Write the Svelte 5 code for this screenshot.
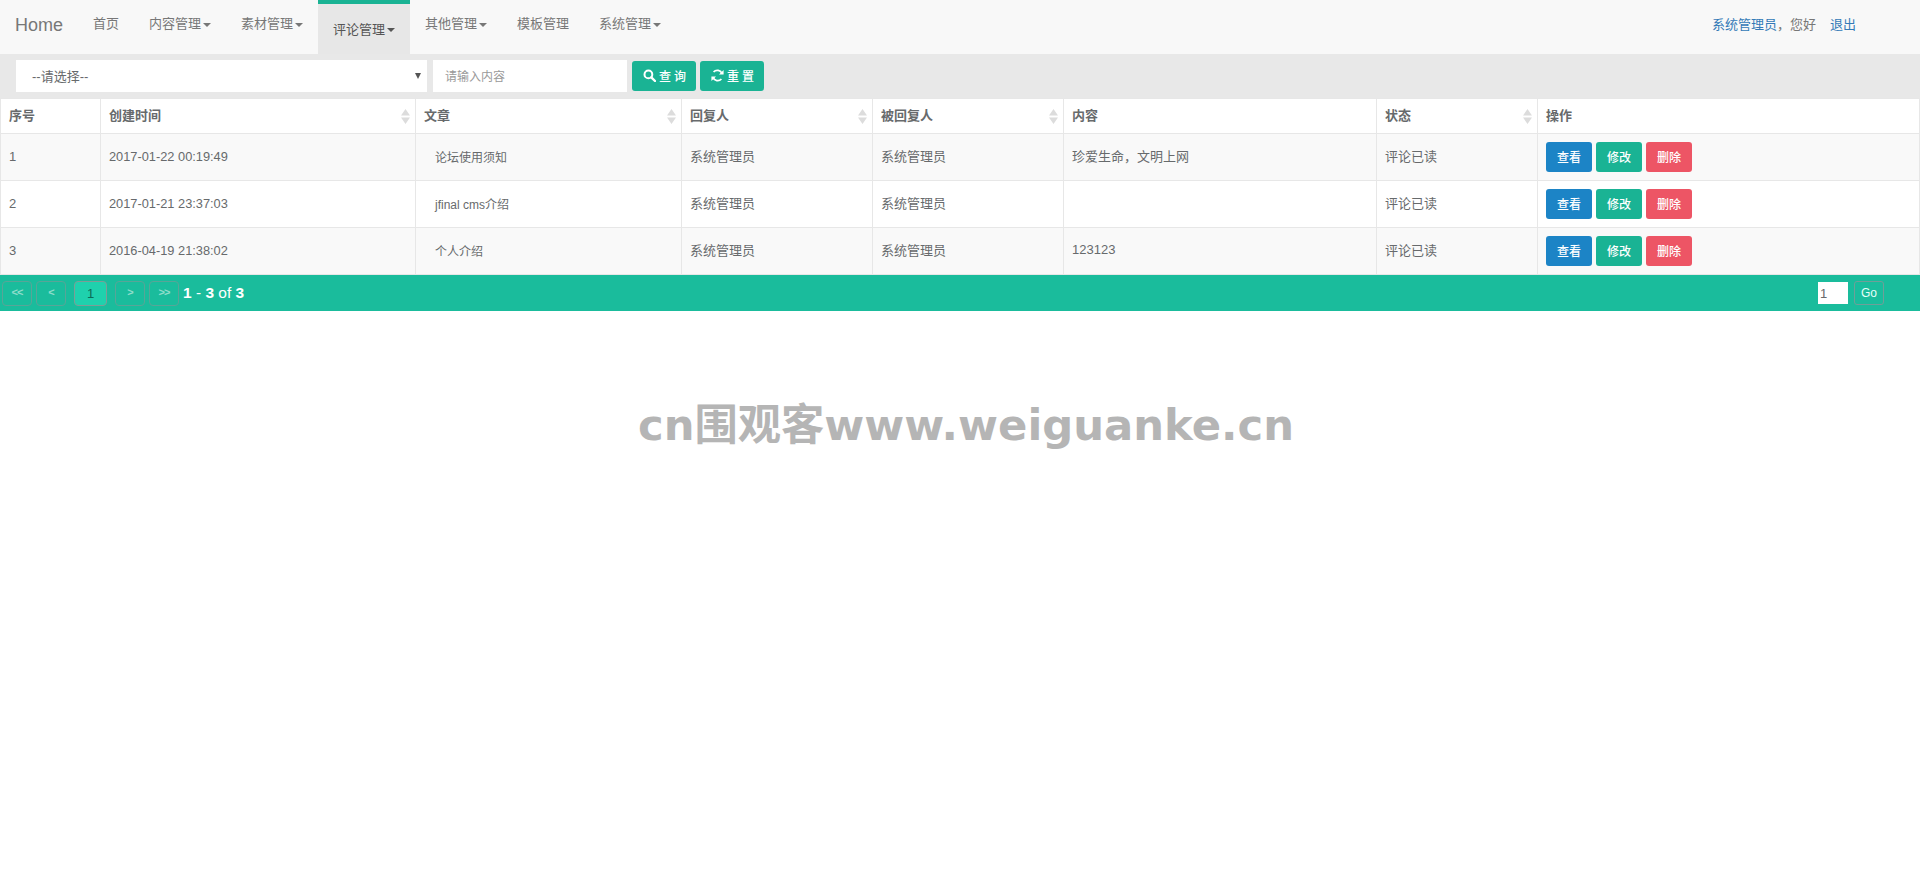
<script lang="ts">
  const navItems = [
    { label: '首页', caret: false },
    { label: '内容管理', caret: true },
    { label: '素材管理', caret: true },
    { label: '评论管理', caret: true, active: true },
    { label: '其他管理', caret: true },
    { label: '模板管理', caret: false },
    { label: '系统管理', caret: true }
  ];

  const columns = [
    { label: '序号', width: 100 },
    { label: '创建时间', width: 315, sort: true },
    { label: '文章', width: 266, sort: true },
    { label: '回复人', width: 191, sort: true },
    { label: '被回复人', width: 191, sort: true },
    { label: '内容', width: 313 },
    { label: '状态', width: 161, sort: true },
    { label: '操作' }
  ];

  const rows = [
    { id: 1, created: '2017-01-22 00:19:49', article: '论坛使用须知', content: '珍爱生命，文明上网' },
    { id: 2, created: '2017-01-21 23:37:03', article: 'jfinal cms介绍', content: '' },
    { id: 3, created: '2016-04-19 21:38:02', article: '个人介绍', content: '123123' }
  ];
</script>

<nav class="navbar">
  <a class="brand" href="#home">Home</a>
  <ul class="navList">
    {#each navItems as item}
      <li class="navItem" class:navItem--active={item.active}>
        {item.label}{#if item.caret}<span class="caret"></span>{/if}
      </li>
    {/each}
  </ul>
  <div class="userInfo">
    <a href="#user">系统管理员</a>，您好<a class="logout" href="#logout">退出</a>
  </div>
</nav>

<form class="toolbar">
  <div class="selectBox">
    <select class="select">
      <option>--请选择--</option>
    </select>
    <span class="selectArrow"></span>
  </div>
  <input class="search" placeholder="请输入内容" />
  <button type="button" class="toolBtn">
    <svg width="13" height="13" viewBox="0 0 13 13" aria-hidden="true">
      <circle cx="5.4" cy="5.4" r="3.9" fill="none" stroke="#fff" stroke-width="2" />
      <path d="M8.3 8.3 12 12" stroke="#fff" stroke-width="2.4" stroke-linecap="round" />
    </svg>
    查询
  </button>
  <button type="button" class="toolBtn">
    <svg width="13" height="13" viewBox="0 0 13 13" aria-hidden="true">
      <path d="M11 4.6A5 5 0 0 0 2.6 3" fill="none" stroke="#fff" stroke-width="1.8" />
      <path d="M2 8.4A5 5 0 0 0 10.4 10" fill="none" stroke="#fff" stroke-width="1.8" />
      <path d="M12.6 1v4.6H8zM.4 12V7.4H5z" fill="#fff" />
    </svg>
    重置
  </button>
</form>

<table class="grid">
  <colgroup>
    {#each columns as col}
      <col style={col.width ? `width: ${col.width}px` : ''} />
    {/each}
  </colgroup>
  <thead>
    <tr>
      {#each columns as col}
        <th>
          <div class="thInner">
            <span class="thLabel">{col.label}</span>
            {#if col.sort}
              <svg class="sortIcon" width="9" height="15" viewBox="0 0 9 15" aria-hidden="true">
                <path d="M4.5 0 9 6.5H0zM0 8.5h9L4.5 15z" fill="#dcdcdc" />
              </svg>
            {/if}
          </div>
        </th>
      {/each}
    </tr>
  </thead>
  <tbody>
    {#each rows as row}
      <tr>
        <td>{row.id}</td>
        <td class="numeric">{row.created}</td>
        <td><a class="articleLink" href="#article">{row.article}</a></td>
        <td class="cjk">系统管理员</td>
        <td class="cjk">系统管理员</td>
        <td class="cjk">{row.content}</td>
        <td class="cjk">评论已读</td>
        <td class="actionCell">
          <div class="actions">
            <button type="button" class="actionBtn actionBtn--view">查看</button>
            <button type="button" class="actionBtn actionBtn--edit">修改</button>
            <button type="button" class="actionBtn actionBtn--delete">删除</button>
          </div>
        </td>
      </tr>
    {/each}
  </tbody>
</table>

<div class="pager">
  <span class="pageBtn">&lt;&lt;</span>
  <span class="pageBtn">&lt;</span>
  <span class="pageBtn pageBtn--current">1</span>
  <span class="pageBtn">&gt;</span>
  <span class="pageBtn">&gt;&gt;</span>
  <span class="pageInfo"><b>1</b> - <b>3</b> of <b>3</b></span>
  <input class="pageInput" value="1" />
  <button type="button" class="goBtn">Go</button>
</div>

<div class="watermark">cn围观客www.weiguanke.cn</div>

<style>
  :global(body) {
    background: #fff;
    color: #676a6c;
    font-family: "Liberation Sans", "Noto Sans CJK SC", sans-serif;
    font-size: 13px;
  }

  a {
    color: #337ab7;
    text-decoration: none;
  }

  .navbar {
    display: flex;
    align-items: center;
    height: 54px;
    background: #f8f8f8;
  }

  .brand {
    padding: 0 15px 4px;
    font-size: 18px;
    color: #777;
  }

  .navList {
    display: flex;
    height: 100%;
    margin: 0;
    padding: 0;
    list-style: none;
  }

  .navItem {
    padding: 0 15px 9px;
    display: flex;
    align-items: center;
    color: #777;
  }

  .navItem--active {
    padding-bottom: 2px;
    padding-top: 4px;
    background: #e7e7e7;
    color: #555;
    box-shadow: inset 0 4px 0 #1ab394;
  }

  .caret {
    margin-left: 2px;
    margin-top: 4px;
    border-top: 4px solid currentColor;
    border-left: 4px solid transparent;
    border-right: 4px solid transparent;
  }

  .userInfo {
    margin-left: auto;
    padding-right: 64px;
    padding-bottom: 8px;
    color: #777;
  }

  .logout {
    margin-left: 14px;
  }

  .toolbar {
    display: flex;
    align-items: center;
    gap: 6px;
    height: 44px;
    padding-left: 16px;
    background: #e8e8e8;
  }

  .selectBox {
    position: relative;
    width: 411px;
    height: 32px;
  }

  .select {
    appearance: none;
    width: 100%;
    height: 100%;
    padding: 1px 0 0 16px;
    border: none;
    border-radius: 0;
    background: #fff;
    color: #676a6c;
    font: inherit;
  }

  .selectArrow {
    position: absolute;
    top: 13px;
    right: 6px;
    border-top: 6px solid #555;
    border-left: 3px solid transparent;
    border-right: 3px solid transparent;
  }

  .search {
    box-sizing: border-box;
    width: 194px;
    height: 32px;
    padding: 1px 12px 0;
    border: none;
    background: #fff;
    font: inherit;
    font-size: 12px;
  }

  .search::placeholder {
    color: #999;
  }

  .toolBtn {
    display: flex;
    align-items: center;
    gap: 3px;
    width: 64px;
    height: 30px;
    margin-left: -1px;
    padding: 0 0 2px 11px;
    border: none;
    border-radius: 3px;
    background: #1ab394;
    color: #fff;
    font: inherit;
    font-size: 12px;
    font-weight: 500;
    letter-spacing: 3px;
    white-space: nowrap;
  }

  .toolBtn + .toolBtn {
    margin-left: -2px;
  }

  .grid {
    width: 100%;
    table-layout: fixed;
    border-collapse: collapse;
    border: 1px solid #e7e7e7;
  }

  th,
  td {
    padding: 0 8px;
    border: 1px solid #e7e7e7;
    text-align: left;
  }

  th {
    height: 34px;
    background: #fff;
    font-size: 13px;
    font-weight: bold;
  }

  td {
    box-sizing: border-box;
    height: 47px;
    padding-bottom: 2px;
    font-size: 13px;
  }

  .cjk {
    padding-bottom: 3px;
  }

  .actionCell {
    padding-bottom: 0;
  }

  tbody tr:nth-child(odd) td {
    background: #f9f9f9;
  }

  .thInner {
    display: flex;
    align-items: center;
    justify-content: space-between;
  }

  .thLabel {
    padding-bottom: 3px;
  }

  .sortIcon {
    margin-right: -3px;
  }

  .numeric {
    font-size: 12.8px;
  }

  .articleLink {
    padding-left: 11px;
    color: #676a6c;
    font-size: 12px;
  }

  .actions {
    display: flex;
    gap: 4px;
  }

  .actionBtn {
    width: 46px;
    height: 30px;
    padding: 0 0 2px;
    border: none;
    border-radius: 3px;
    color: #fff;
    font: inherit;
    font-size: 12px;
    font-weight: 500;
  }

  .actionBtn--view {
    background: #1c84c6;
  }

  .actionBtn--edit {
    background: #1ab394;
  }

  .actionBtn--delete {
    background: #ed5565;
  }

  .pager {
    display: flex;
    align-items: center;
    gap: 4px;
    height: 36px;
    padding: 0 36px 0 2px;
    background: #1abc9c;
  }

  .pageBtn {
    display: flex;
    align-items: center;
    justify-content: center;
    box-sizing: border-box;
    width: 30px;
    height: 25px;
    padding-bottom: 3px;
    border: 1px solid #58a597;
    border-radius: 4px;
    color: #8fdccb;
    font-size: 11px;
    font-weight: bold;
    letter-spacing: -1px;
  }

  .pageBtn--current {
    width: 33px;
    margin: 0 4px;
    padding-bottom: 0;
    border-color: #7d9d96;
    background: #1fd1ad;
    color: #0b6b58;
    font-size: 13px;
    font-weight: normal;
    letter-spacing: 0;
  }

  .pageInfo {
    color: #fff;
    font-size: 15.5px;
  }

  .pageInput {
    box-sizing: border-box;
    width: 30px;
    height: 22px;
    margin-left: auto;
    padding: 0 2px;
    border: none;
    background: #fff;
    color: #676a6c;
    font: inherit;
  }

  .goBtn {
    width: 30px;
    height: 24px;
    margin-left: 2px;
    padding: 0;
    border: 1px solid #6f9f98;
    border-radius: 3px;
    background: transparent;
    color: #e6fff9;
    font: inherit;
    font-size: 12px;
  }

  .watermark {
    margin-top: 84px;
    padding-left: 12px;
    text-align: center;
    color: #b5b5b5;
    font-family: "DejaVu Sans", "Noto Sans CJK SC", sans-serif;
    font-size: 43.3px;
    font-weight: bold;
    line-height: 60px;
  }
</style>
